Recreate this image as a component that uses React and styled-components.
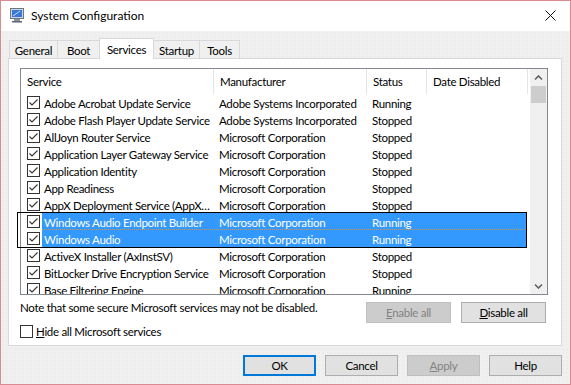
import React from "react";
import styled, { createGlobalStyle } from "styled-components";

const services = [
  ["Adobe Acrobat Update Service", "Adobe Systems Incorporated", "Running"],
  ["Adobe Flash Player Update Service", "Adobe Systems Incorporated", "Stopped"],
  ["AllJoyn Router Service", "Microsoft Corporation", "Stopped"],
  ["Application Layer Gateway Service", "Microsoft Corporation", "Stopped"],
  ["Application Identity", "Microsoft Corporation", "Stopped"],
  ["App Readiness", "Microsoft Corporation", "Stopped"],
  ["AppX Deployment Service (AppXSVC)", "Microsoft Corporation", "Stopped"],
  ["Windows Audio Endpoint Builder", "Microsoft Corporation", "Running", true, true],
  ["Windows Audio", "Microsoft Corporation", "Running", true],
  ["ActiveX Installer (AxInstSV)", "Microsoft Corporation", "Stopped"],
  ["BitLocker Drive Encryption Service", "Microsoft Corporation", "Stopped"],
  ["Base Filtering Engine", "Microsoft Corporation", "Running"],
];

const tabs = [
  { label: "General", w: 49 },
  { label: "Boot", w: 43 },
  { label: "Services", w: 55, active: true },
  { label: "Startup", w: 47 },
  { label: "Tools", w: 41 },
];

function CheckBox({ checked }) {
  return (
    <Box>
      {checked && (
        <svg width="11" height="11" viewBox="0 0 11 11">
          <path d="M1.5 5.5 L4 8 L9.5 2.5" fill="none" stroke="#333" strokeWidth="1.1" />
        </svg>
      )}
    </Box>
  );
}

function Chevron({ down }) {
  return (
    <svg width="9" height="6" viewBox="0 0 9 6">
      <path
        d={down ? "M1 1.5 L4.5 5 L8 1.5" : "M1 4.5 L4.5 1 L8 4.5"}
        fill="none"
        stroke="#606060"
        strokeWidth="1.6"
      />
    </svg>
  );
}

function App() {
  return (
    <>
      <GlobalStyle />
      <Window>
        <TitleBar>
          <svg width="14" height="15" viewBox="0 0 14 15">
            <rect x="0.5" y="0.5" width="13" height="10" fill="#cfd6df" stroke="#6d7886" />
            <rect x="2" y="2" width="10" height="7" fill="#3a78d6" />
            <path d="M3 8 L10 3" stroke="#bfe0ff" strokeWidth="1" />
            <rect x="4" y="11" width="6" height="2" fill="#8a929c" />
            <rect x="2" y="13" width="10" height="1.5" fill="#5b636d" />
          </svg>
          <Title>System Configuration</Title>
          <Close>
            <svg width="11" height="11" viewBox="0 0 11 11">
              <path d="M0.5 0.5 L10.5 10.5 M10.5 0.5 L0.5 10.5" stroke="#111" strokeWidth="1" />
            </svg>
          </Close>
        </TitleBar>

        <Body>
          <TabStrip>
            {tabs.map((t) => (
              <Tab key={t.label} $w={t.w} $active={t.active}>
                {t.label}
              </Tab>
            ))}
          </TabStrip>

          <Panel>
            <ListBox>
              <Table>
                <Header>
                  <HeadCell $w={193}>Service</HeadCell>
                  <HeadCell $w={153}>Manufacturer</HeadCell>
                  <HeadCell $w={60}>Status</HeadCell>
                  <HeadCell $w={101}>Date Disabled</HeadCell>
                </Header>
                <Rows>
                  {services.map(([name, maker, status, selected, focused]) => (
                    <Row key={name}>
                      <CheckCell>
                        <CheckBox checked />
                      </CheckCell>
                      <Cells $selected={selected} $focused={focused}>
                        <Cell $w={171} $pad={2} $end={0}>{name}</Cell>
                        <Cell $w={153}>{maker}</Cell>
                        <Cell $w={60}>{status}</Cell>
                        <Cell $w={101} />
                      </Cells>
                    </Row>
                  ))}
                </Rows>
              </Table>
              <ScrollBar>
                <ScrollButton>
                  <Chevron />
                </ScrollButton>
                <Thumb />
                <Track />
                <ScrollButton>
                  <Chevron down />
                </ScrollButton>
              </ScrollBar>
            </ListBox>

            <NoteRow>
              <Note>Note that some secure Microsoft services may not be disabled.</Note>
              <ButtonGroup>
                <PushButton $w={85} disabled>
                  <u>E</u>nable all
                </PushButton>
                <PushButton $w={85}>
                  <u>D</u>isable all
                </PushButton>
              </ButtonGroup>
            </NoteRow>

            <HideRow>
              <CheckBox />
              <span>
                <u>H</u>ide all Microsoft services
              </span>
            </HideRow>

            <FocusRing />
          </Panel>

          <DialogButtons>
            <PushButton $w={73} $default>
              OK
            </PushButton>
            <PushButton $w={73}>Cancel</PushButton>
            <PushButton $w={73} disabled>
              <u>A</u>pply
            </PushButton>
            <PushButton $w={73}>Help</PushButton>
          </DialogButtons>
        </Body>
      </Window>
    </>
  );
}

const GlobalStyle = createGlobalStyle`
  * { box-sizing: border-box; }
  body {
    margin: 0;
    font-family: "Segoe UI", Lato, "Noto Sans", sans-serif;
    font-size: 11.5px;
    letter-spacing: -0.3px;
    color: #000;
  }
`;

const Window = styled.div`
  width: 571px;
  height: 385px;
  border: 1px solid #d98a93;
  display: flex;
  flex-direction: column;
  background: #f0f0f0;
`;

const TitleBar = styled.div`
  height: 30px;
  background: #fff;
  display: flex;
  align-items: center;
  padding-left: 9px;
  padding-bottom: 1px;
`;

const Title = styled.div`
  font-size: 12px;
  letter-spacing: 0;
  margin-left: 7px;
  flex: 1;
`;

const Close = styled.div`
  width: 46px;
  height: 30px;
  display: flex;
  align-items: center;
  justify-content: center;
  padding-bottom: 1px;
  margin-right: -3px;
`;

const Body = styled.div`
  flex: 1;
  display: flex;
  flex-direction: column;
  padding: 7px 8px 8px 7px;
  background-color: #f0f0f0;
  background-image: radial-gradient(#e6e6e6 0.6px, transparent 0.8px);
  background-size: 4px 4px;
`;

const TabStrip = styled.div`
  height: 20px;
  display: flex;
  align-items: flex-end;
  padding-left: 1px;
`;

const Tab = styled.div`
  width: ${(p) => p.$w}px;
  height: ${(p) => (p.$active ? 21 : 18)}px;
  margin-bottom: ${(p) => (p.$active ? -1 : 0)}px;
  margin-left: -1px;
  &:first-child { margin-left: 0; }
  position: relative;
  z-index: ${(p) => (p.$active ? 2 : 1)};
  border: 1px solid #d9d9d9;
  border-bottom: none;
  background: ${(p) => (p.$active ? "#fff" : "#f0f0f0")};
  display: flex;
  align-items: center;
  justify-content: center;
  padding-top: 1px;
  padding-bottom: ${(p) => (p.$active ? 1 : 0)}px;
`;

const Panel = styled.div`
  position: relative;
  height: 288px;
  background: #fff;
  border: 1px solid #d9d9d9;
  padding: 9px 13px 0 11px;
  display: flex;
  flex-direction: column;
`;

const ListBox = styled.div`
  height: 227px;
  border: 1px solid #828790;
  display: flex;
  overflow: hidden;
`;

const Table = styled.div`
  flex: 1;
  display: flex;
  flex-direction: column;
`;

const Header = styled.div`
  height: 25px;
  display: flex;
  flex-shrink: 0;
`;

const HeadCell = styled.div`
  width: ${(p) => p.$w}px;
  border-right: 1px solid #e5e5e5;
  padding: 0 6px;
  display: flex;
  align-items: center;
  white-space: nowrap;
`;

const Rows = styled.div`
  flex: 1;
  overflow: hidden;
`;

const Row = styled.div`
  height: 17px;
  display: flex;
`;

const CheckCell = styled.div`
  width: 21px;
  padding-left: 6px;
  display: flex;
  align-items: center;
`;

const Cells = styled.div`
  display: flex;
  background: ${(p) => (p.$selected ? "#3399ff" : "transparent")};
  color: ${(p) => (p.$selected ? "#fff" : "#000")};
  border-bottom: ${(p) => (p.$focused ? "1px dotted #d8903f" : "none")};
`;

const Cell = styled.div`
  width: ${(p) => p.$w}px;
  padding: 2px ${(p) => p.$end ?? 3}px 0 ${(p) => p.$pad ?? 6}px;
  line-height: 15px;
  white-space: nowrap;
  overflow: hidden;
  text-overflow: ellipsis;
`;

const Box = styled.div`
  width: 13px;
  height: 13px;
  border: 1px solid #333;
  background: #fff;
  flex-shrink: 0;
  display: flex;
  align-items: center;
  justify-content: center;
`;

const ScrollBar = styled.div`
  width: 17px;
  margin-left: 2px;
  background: #f0f0f0;
  display: flex;
  flex-direction: column;
`;

const ScrollButton = styled.div`
  height: 17px;
  display: flex;
  align-items: center;
  justify-content: center;
`;

const Thumb = styled.div`
  height: 17px;
  margin: 0 1px;
  background: #cdcdcd;
`;

const Track = styled.div`
  flex: 1;
`;

const NoteRow = styled.div`
  margin-top: 4px;
  height: 24px;
  display: flex;
  justify-content: space-between;
  padding-right: 2px;
`;

const Note = styled.div`
  line-height: 15px;
  padding-top: 1px;
`;

const ButtonGroup = styled.div`
  padding-top: 3px;
  display: flex;
  gap: 10px;
`;

const PushButton = styled.button`
  width: ${(p) => p.$w}px;
  height: 21px;
  font: inherit;
  letter-spacing: inherit;
  color: ${(p) => (p.disabled ? "#838383" : "#000")};
  background: ${(p) => (p.disabled ? "#cccccc" : "#e1e1e1")};
  border: 1px solid
    ${(p) => (p.$default ? "#0078d7" : p.disabled ? "#bfbfbf" : "#adadad")};
  box-shadow: ${(p) => (p.$default ? "inset 0 0 0 1px #0078d7" : "none")};
  padding: 0;
  u { text-decoration: underline; }
`;

const HideRow = styled.div`
  margin-top: 2px;
  display: flex;
  align-items: center;
  gap: 3px;
  line-height: 13px;
`;

const FocusRing = styled.div`
  position: absolute;
  left: 8px;
  top: 153px;
  width: 510px;
  height: 36px;
  border: 1px solid #000;
  pointer-events: none;
`;

const DialogButtons = styled.div`
  margin-top: 9px;
  display: flex;
  justify-content: flex-end;
  gap: 9px;
`;

export default App;
